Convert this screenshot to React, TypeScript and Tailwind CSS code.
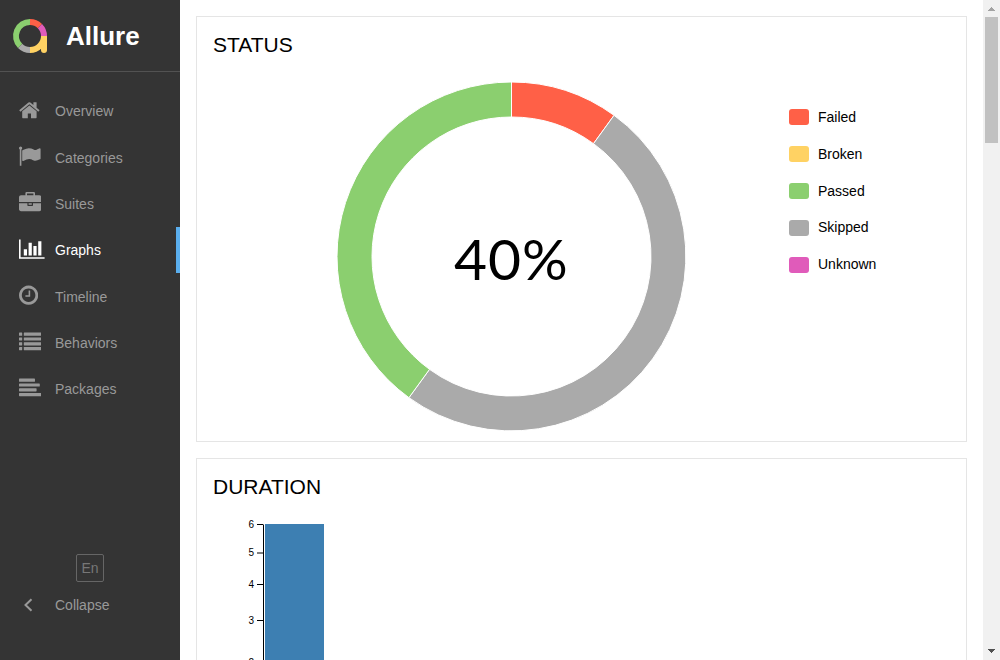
import React from "react";

const navBox = "flex h-[46.33px] items-center pl-[19px] text-sm";

function Glyph({ width = 1792, x = 0, children }: { width?: number; x?: number; children: React.ReactNode }) {
  return (
    <svg
      className="h-[22.4px] shrink-0 fill-current"
      style={{ width: (width / 1792) * 22.4 }}
      viewBox={`${x} 0 ${width} 1792`}
    >
      {children}
    </svg>
  );
}

const items = [
  {
    label: "Overview",
    icon: (
      <Glyph width={1664} x={64}>
        <path d="M1472 992v480q0 26-19 45t-45 19h-384v-384h-256v384h-384q-26 0-45-19t-19-45v-480q0-1 .5-3t.5-3l575-474 575 474q1 2 1 6zm223-69l-62 74q-8 9-21 11h-3q-13 0-21-7l-692-577-692 577q-12 8-24 7-13-2-21-11l-62-74q-8-10-7-23.5t11-21.5l719-599q32-26 76-26t76 26l244 204v-195q0-14 9-23t23-9h192q14 0 23 9t9 23v408l219 182q10 8 11 21.5t-7 23.5z" />
      </Glyph>
    ),
  },
  {
    label: "Categories",
    icon: (
      <Glyph x={64}>
        <path d="M320 256q0 72-64 110v1266q0 13-9.500 22.500t-22.500 9.500h-64q-13 0-22.500-9.500t-9.500-22.500v-1266q-64-38-64-110 0-53 37.500-90.500t90.500-37.500 90.500 37.500 37.500 90.500zm1472 64v763q0 25-12.500 38.500t-39.500 27.500q-215 116-369 116-61 0-123.500-22t-108.500-48-115.500-48-142.500-22q-192 0-464 146-17 9-33 9-26 0-45-19t-19-45v-742q0-32 31-55 21-14 79-43 236-120 421-120 107 0 200 29t219 88q38 19 88 19 54 0 117.500-21t110-47 88-47 54.500-21q26 0 45 19t19 45z" />
      </Glyph>
    ),
  },
  {
    label: "Suites",
    icon: (
      <Glyph>
        <path d="M640 256h512v-128h-512v128zm1152 640v480q0 66-47 113t-113 47h-1472q-66 0-113-47t-47-113v-480h672v160q0 26 19 45t45 19h320q26 0 45-19t19-45v-160h672zm-768 0v128h-256v-128h256zm768-480v384h-1792v-384q0-66 47-113t113-47h352v-160q0-40 28-68t68-28h576q40 0 68 28t28 68v160h352q66 0 113 47t47 113z" />
      </Glyph>
    ),
  },
  {
    label: "Graphs",
    active: true,
    icon: (
      <Glyph width={2048}>
        <path d="M640 896v512h-256v-512h256zm384-512v1024h-256v-1024h256zm1024 1152v128h-2048v-1536h128v1408h1920zm-640-896v768h-256v-768h256zm384-384v1152h-256v-1152h256z" />
      </Glyph>
    ),
  },
  {
    label: "Timeline",
    icon: (
      <Glyph width={1536} x={128}>
        <path d="M1024 544v448q0 14-9 23t-23 9h-320q-14 0-23-9t-9-23v-64q0-14 9-23t23-9h224v-352q0-14 9-23t23-9h64q14 0 23 9t9 23zm416 352q0-148-73-273t-198-198-273-73-273 73-198 198-73 273 73 273 198 198 273 73 273-73 198-198 73-273zm224 0q0 209-103 385.500t-279.500 279.500-385.500 103-385.500-103-279.500-279.500-103-385.500 103-385.500 279.500-279.500 385.500-103 385.500 103 279.500 279.500 103 385.500z" />
      </Glyph>
    ),
  },
  {
    label: "Behaviors",
    icon: (
      <Glyph>
        {[128, 512, 896, 1280].map((y) => (
          <g key={y}>
            <rect x="0" y={y} width="256" height="256" rx="32" />
            <rect x="384" y={y} width="1408" height="256" rx="32" />
          </g>
        ))}
      </Glyph>
    ),
  },
  {
    label: "Packages",
    icon: (
      <Glyph>
        <rect y="128" width="1280" height="256" rx="50" />
        <rect y="512" width="1664" height="256" rx="50" />
        <rect y="896" width="1408" height="256" rx="50" />
        <rect y="1280" width="1792" height="256" rx="50" />
      </Glyph>
    ),
  },
];

function Logo() {
  return (
    <svg className="h-9 w-9 shrink-0" viewBox="0 0 36 36" fill="none" strokeWidth="6">
      <path d="M18 4A14 14 0 0 1 27.900 8.100" stroke="#ff6047" />
      <path d="M27.900 8.100A14 14 0 0 1 32 18" stroke="#e05bba" />
      <path d="M18 32A14 14 0 0 1 8.100 27.900" stroke="#aaaaaa" />
      <path d="M8.100 27.900A14 14 0 0 1 18 4" stroke="#8bcf6f" />
      <path d="M32 18A14 14 0 0 1 18 32M32 18V32" stroke="#ffd263" />
      <circle cx="32" cy="32" r="3" fill="#ffd263" stroke="none" />
    </svg>
  );
}

function Sidebar() {
  return (
    <aside className="flex w-[180px] shrink-0 flex-col bg-[#343434] text-[#999]">
      <div className="flex h-[72px] items-center border-b border-[#525252] pl-3 text-white">
        <Logo />
        <span className="ml-[18px] pt-px text-[26px] font-bold">Allure</span>
      </div>
      <nav className="pt-4">
        {items.map((item) => (
          <div
            key={item.label}
            className={item.active ? `${navBox} border-r-4 border-[#5aaeed] text-white` : navBox}
          >
            <span className="flex w-9 shrink-0 pb-[2px]">{item.icon}</span>
            <span className="pt-[0.2px]">{item.label}</span>
          </div>
        ))}
      </nav>
      <div className="mt-auto flex flex-col pb-8">
        <div className="flex h-7 w-7 items-center justify-center self-center rounded-[2px] border border-[#666] pb-px text-sm text-[#777]">
          En
        </div>
        <div className="flex h-[46px] items-center pl-[23px] text-sm">
          <svg className="mr-[22px] h-[14px] w-[10px]" viewBox="0 0 10 14" fill="none" stroke="currentColor" strokeWidth="2">
            <path d="M8.500 1.300 2.500 7l6 5.700" />
          </svg>
          <span className="pb-px">Collapse</span>
        </div>
      </div>
    </aside>
  );
}

const slices = [
  { color: "#ff6047", from: 0, to: 0.1 },
  { color: "#aaaaaa", from: 0.1, to: 0.6 },
  { color: "#8bcf6f", from: 0.6, to: 1 },
];

function arc(from: number, to: number) {
  const pt = (r: number, t: number) =>
    `${(175.5 + r * Math.sin(t * 2 * Math.PI)).toFixed(3)} ${(175.5 - r * Math.cos(t * 2 * Math.PI)).toFixed(3)}`;
  const large = to - from > 0.5 ? 1 : 0;
  return `M${pt(174.5, from)}A174.5 174.5 0 ${large} 1 ${pt(174.5, to)}L${pt(139.5, to)}A139.5 139.5 0 ${large} 0 ${pt(139.5, from)}Z`;
}

const legend = [
  ["Failed", "bg-[#ff6047]"],
  ["Broken", "bg-[#ffd263]"],
  ["Passed", "bg-[#8bcf6f]"],
  ["Skipped", "bg-[#aaaaaa]"],
  ["Unknown", "bg-[#e05bba]"],
];

function StatusPanel() {
  return (
    <section className="h-[426px] shrink-0 border border-[#e5e5e5] px-4 pt-[15px]">
      <h2 className="text-[21px] leading-[26px]">STATUS</h2>
      <div className="flex pt-[23px]">
        <svg className="ml-[123px] h-[351px] w-[351px]" viewBox="0 0 351 351">
          {slices.map((s) => (
            <path key={s.color} d={arc(s.from, s.to)} fill={s.color} stroke="#fff" strokeWidth="1" />
          ))}
          <text x="175.3" y="199" textAnchor="middle" className="font-['Lato',sans-serif] text-[57px] tracking-[1px]">
            40%
          </text>
        </svg>
        <ul className="ml-[102px] pt-[18px] text-sm">
          {legend.map(([label, color]) => (
            <li key={label} className="flex h-[36.8px] items-center gap-[9px]">
              <span className={`h-4 w-5 rounded-[3px] ${color}`} />
              <span className="pb-[0.6px]">{label}</span>
            </li>
          ))}
        </ul>
      </div>
    </section>
  );
}

const ticks = [
  { value: 6, y: 6.5 },
  { value: 5, y: 35 },
  { value: 4, y: 66.5 },
  { value: 3, y: 102.5 },
  { value: 2, y: 145 },
];

function DurationPanel() {
  return (
    <section className="h-[426px] shrink-0 border border-[#e5e5e5] px-4 pt-[15px]">
      <h2 className="text-[21px] leading-[26px]">DURATION</h2>
      <svg className="mt-[18px] h-[350px] w-[730px]" viewBox="0 0 730 350">
        <path d="M50.500 6.500V340" stroke="#000" />
        {ticks.map((t) => (
          <g key={t.value}>
            <path d={`M44 ${t.y}h6`} stroke="#000" />
            <text x="41" y={t.y + 3.2} textAnchor="end" fontSize="10">
              {t.value}
            </text>
          </g>
        ))}
        <rect x="52" y="6" width="59" height="334" fill="#3d7fb2" />
      </svg>
    </section>
  );
}

export default function App() {
  return (
    <div className="flex h-[660px] w-[1000px] overflow-hidden bg-white font-['Liberation_Sans',Arial,sans-serif] text-black">
      <Sidebar />
      <main className="flex min-w-0 flex-1 flex-col gap-4 overflow-hidden px-4 pt-4">
        <StatusPanel />
        <DurationPanel />
      </main>
      <div className="flex w-[17px] shrink-0 flex-col items-center bg-[#f1f1f1]">
        <svg className="h-[17px] w-[17px] shrink-0" viewBox="0 0 17 17" shapeRendering="crispEdges">
          <path d="M5 11 8.500 7 12 11Z" fill="#a3a3a3" />
        </svg>
        <div className="h-[126px] w-[13px] bg-[#c1c1c1]" />
        <svg className="mt-auto h-[17px] w-[17px] shrink-0" viewBox="0 0 17 17" shapeRendering="crispEdges">
          <path d="M5 6 8.500 10 12 6Z" fill="#505050" />
        </svg>
      </div>
    </div>
  );
}
